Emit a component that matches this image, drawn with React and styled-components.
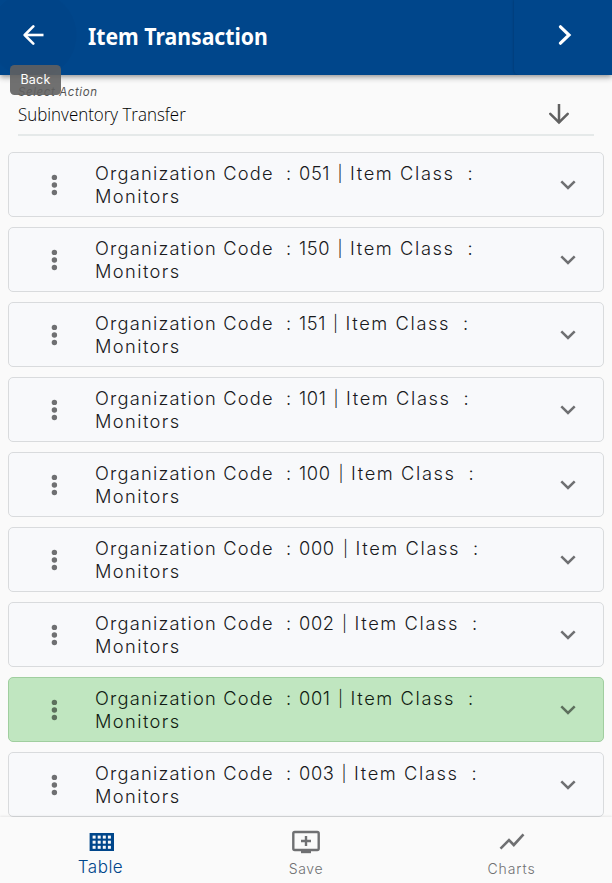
import React from 'react';
import styled, { createGlobalStyle } from 'styled-components';

const GlobalStyle = createGlobalStyle`
  * { box-sizing: border-box; }
  body { margin: 0; background: #fafafa; overflow: hidden; font-family: Inter, sans-serif; }
`;

const Screen = styled.div`
  display: flex;
  flex-direction: column;
  width: 612px;
  height: 883px;
  overflow: hidden;
  background: #fafafa;
`;

const Header = styled.header`
  position: relative;
  z-index: 2;
  flex: none;
  display: flex;
  height: 75px;
  background: #00468b;
  box-shadow: 0 2px 4px -1px rgba(0, 0, 0, 0.24), 0 4px 5px rgba(0, 0, 0, 0.14), 0 1px 8px rgba(0, 0, 0, 0.1);
`;

const BackButton = styled.button`
  flex: none;
  display: flex;
  align-items: flex-start;
  width: 77px;
  height: 75px;
  padding: 25px 0 0 23px;
  border: 0;
  background: radial-gradient(circle at 33px 35px, #004488 0 43px, transparent 44px);
`;

const Tooltip = styled.div`
  position: absolute;
  left: 10px;
  top: 65px;
  width: 51px;
  height: 30px;
  border-radius: 4.5px;
  background: rgba(97, 97, 97, 0.9);
  color: #fff;
  font-size: 12.5px;
  letter-spacing: 0.25px;
  line-height: 29px;
  text-align: center;
`;

const Title = styled.h1`
  flex: 1;
  margin: 0;
  padding-left: 11px;
  color: #fff;
  font: 700 22.4px/74px 'Noto Sans', sans-serif;
`;

const Fitted = styled.span`
  display: inline-block;
  transform-origin: left;
  transform: scaleX(${p => p.$fit});
  white-space: nowrap;
`;

const NextButton = styled.button`
  display: flex;
  align-items: flex-start;
  width: 98px;
  padding: 25px 0 0 44px;
  border: 0;
  border-bottom-left-radius: 5px;
  background: #00468b;
  box-shadow: -1px 0 2px rgba(0, 0, 0, 0.12);
  clip-path: inset(0 0 0 -4px);
`;

const Select = styled.div`
  flex: none;
  display: grid;
  grid-template-columns: 1fr 45px;
  grid-template-rows: 14px 45px;
  height: 61px;
  margin: 0 18px 16px;
  padding-top: 10px;
  border-bottom: 2px solid #e5e9e9;
`;

const SelectLabel = styled.div`
  grid-column: 1 / 3;
  color: #555;
  font-size: 11.5px;
  font-style: italic;
  line-height: 14px;
  letter-spacing: 0.6px;
`;

const SelectValue = styled.div`
  color: #000;
  font: 300 18px/30px 'Open Sans', sans-serif;
`;

const SelectArrow = styled.svg`
  display: block;
  margin: 5px 0 0;
`;

const List = styled.main`
  flex: 1;
  min-height: 0;
  overflow: hidden;
  display: flex;
  flex-direction: column;
  gap: 10px;
  padding: 0 8px;
`;

const Card = styled.article`
  flex: none;
  display: flex;
  height: 65px;
  border: 1px solid ${p => (p.$active ? '#a0ce9f' : '#d9dbdd')};
  border-radius: 5px;
  background: ${p => (p.$active ? '#c0e6c0' : '#f8f9fb')};
  color: ${p => (p.$active ? '#101c12' : '#191a1d')};
`;

const Dots = styled.svg`
  flex: none;
  width: 8px;
  height: 22px;
  margin: 21px 36px 0 41px;
  fill: ${p => (p.$active ? '#5d705d' : '#6f7072')};
`;

const CardText = styled.div`
  flex: 1;
  padding: 9px 0 0 1px;
  font-size: 18.3px;
  font-weight: 300;
  line-height: 23px;
  white-space: nowrap;
`;

const Line = styled.div`
  display: flex;
`;

const Part = styled.span`
  flex: none;
  width: ${p => p.$w}px;
  letter-spacing: ${p => p.$ls || 0}px;
`;

const Bar = styled(Part)`
  font-size: 16px;
`;

const Chevron = styled.svg`
  flex: none;
  width: 16px;
  height: 10px;
  margin: 27px 27px 0 0;
  stroke: ${p => (p.$active ? '#5d705d' : '#6f7072')};
`;

const Nav = styled.nav`
  position: relative;
  flex: none;
  display: flex;
  height: 66px;
  background: #fafafa;
  box-shadow: 0 -1px 2px rgba(0, 0, 0, 0.08);
`;

const NavItem = styled.a`
  width: ${p => p.$w}px;
  display: flex;
  flex-direction: column;
  align-items: center;
  color: ${p => (p.$active ? '#00468b' : '#6f7072')};
  padding-left: ${p => p.$shift || 0}px;
`;

const NavIcon = styled.svg`
  display: block;
  width: 28px;
  height: 24px;
  margin-top: 13px;
`;

const NavLabel = styled.span`
  margin-top: ${p => (p.$active ? 2 : 4)}px;
  margin-left: ${p => (p.$active ? -2 : 0)}px;
  font-size: ${p => (p.$active ? 17 : 14)}px;
  font-weight: ${p => (p.$active ? 350 : 300)};
  line-height: 22px;
  letter-spacing: ${p => p.$ls}px;
`;

const rows = [
  { code: '051', w: 38.5 },
  { code: '150', w: 38.5 },
  { code: '151', w: 34 },
  { code: '101', w: 34.5 },
  { code: '100', w: 39.5 },
  { code: '000', w: 44 },
  { code: '002', w: 43 },
  { code: '001', w: 39, active: true },
  { code: '003', w: 42.5 },
];

function ItemCard({ code, w, active }) {
  return (
    <Card $active={active}>
      <Dots $active={active} viewBox="0 0 8 22">
        <circle cx="4.4" cy="3.4" r="2.7" />
        <circle cx="4.4" cy="11" r="2.7" />
        <circle cx="4.4" cy="18.5" r="2.7" />
      </Dots>
      <CardText>
        <Line>
          <Part $w={191} $ls={1.2}>Organization Code</Part>
          <Part $w={13}>:</Part>
          <Part $w={w} $ls={0.6}>{code}</Part>
          <Bar $w={12.5}>|</Bar>
          <Part $w={117.5} $ls={1.6}>Item Class</Part>
          <Part $w={8}>:</Part>
        </Line>
        <Line>
          <Part $w={90} $ls={1.4}>Monitors</Part>
        </Line>
      </CardText>
      <Chevron $active={active} viewBox="0 0 16 10" fill="none" strokeWidth="2.5">
        <path d="M1.3 1.3 L8 8 L14.7 1.3" />
      </Chevron>
    </Card>
  );
}

const holes = [];
for (let r = 0; r < 3; r++) for (let c = 0; c < 4; c++) holes.push([4.6 + c * 5.1, 5.6 + r * 5.1]);

export default function App() {
  return (
    <>
      <GlobalStyle />
      <Screen>
        <Header>
          <BackButton aria-label="Back">
            <svg width="22" height="20" viewBox="0 0 22 20" fill="none" stroke="#fff" strokeWidth="2.6" strokeLinecap="round" strokeLinejoin="round">
              <path d="M10.3 1.4 L1.7 10 L10.3 18.6" />
              <path d="M2 10 H20.5" strokeLinecap="butt" />
            </svg>
          </BackButton>
          <Title><Fitted $fit={0.947}>Item Transaction</Fitted></Title>
          <NextButton aria-label="Next">
            <svg width="14" height="20" viewBox="0 0 14 20" fill="none" stroke="#fff" strokeWidth="3.2">
              <path d="M2.5 1.8 L11 10 L2.5 18.2" strokeLinecap="round" />
            </svg>
          </NextButton>
          <Tooltip>Back</Tooltip>
        </Header>
        <Select>
          <SelectLabel>Select Action</SelectLabel>
          <SelectValue><Fitted $fit={0.94}>Subinventory Transfer</Fitted></SelectValue>
          <SelectArrow width="22" height="21" viewBox="0 0 22 21" fill="none" stroke="#616161" strokeWidth="2.5">
            <path d="M10 0 V18.5" />
            <path d="M1.3 9.8 L10 18.5 L18.7 9.8" strokeLinecap="round" />
          </SelectArrow>
        </Select>
        <List>
          {rows.map(r => <ItemCard key={r.code} {...r} />)}
        </List>
        <Nav>
          <NavItem $w={203} $active>
            <NavIcon viewBox="0 0 28 24">
              <rect x="1.6" y="3" width="24.4" height="18" fill="#00468b" />
              {holes.map(([x, y]) => <rect key={`${x}-${y}`} x={x} y={y} width="3" height="3" fill="#fafafa" />)}
            </NavIcon>
            <NavLabel $active $ls={0.5}>Table</NavLabel>
          </NavItem>
          <NavItem $w={206}>
            <NavIcon viewBox="0 0 28 24" fill="none" stroke="currentColor" strokeWidth="2.4">
              <rect x="1.3" y="2" width="25.4" height="18" rx="1.4" />
              <path d="M9 21.8 H19" strokeWidth="2.8" />
              <path d="M14 6 V16 M9 11 H19" strokeWidth="2.4" />
            </NavIcon>
            <NavLabel $ls={0.6}>Save</NavLabel>
          </NavItem>
          <NavItem $w={203} $shift={2}>
            <NavIcon viewBox="0 0 28 24" fill="none" stroke="currentColor" strokeWidth="2.6">
              <path d="M2.5 18.7 L11 10.2 L15.8 15 L25.5 4.4" />
            </NavIcon>
            <NavLabel $ls={0.9}>Charts</NavLabel>
          </NavItem>
        </Nav>
      </Screen>
    </>
  );
}
